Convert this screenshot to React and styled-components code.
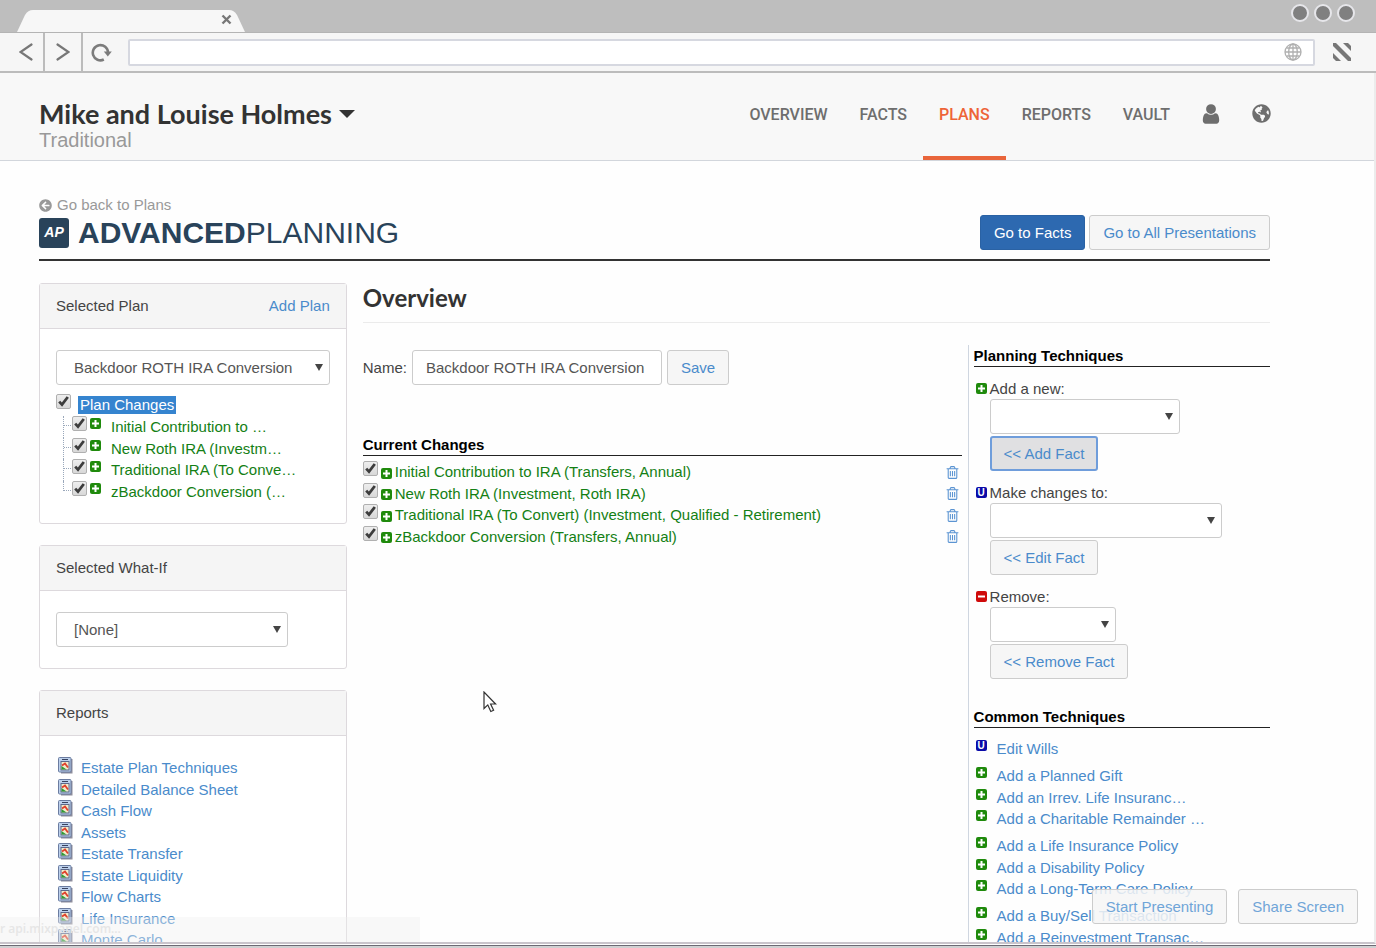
import React from "react";
import styled, { createGlobalStyle, css } from "styled-components";
import { FaArrowCircleLeft, FaGlobeAmericas } from "react-icons/fa";

const GlobalStyle = createGlobalStyle`
  * {
    box-sizing: border-box;
  }
  body {
    margin: 0;
    background: #fefefe;
    color: #444;
    font-family: "Liberation Sans", Arial, sans-serif;
    font-size: 15px;
    line-height: 22px;
  }
  a {
    color: #4a8bcb;
    text-decoration: none;
  }
  h1, h2, h3, p, ul {
    margin: 0;
    padding: 0;
  }
  ul {
    list-style: none;
  }
  button, input, select {
    font: inherit;
  }
`;

const Frame = styled.div`
  display: flex;
  flex-direction: column;
  height: 100vh;
  overflow: hidden;
`;

const FrameEdge = styled.div`
  flex: none;
  height: 3px;
  margin-top: 1px;
  border-top: 1px solid #6c6a74;
  background: #d0d0d2;
`;

/* browser bar */

const TabStrip = styled.div`
  display: flex;
  justify-content: space-between;
  flex: none;
  height: 33px;
  padding: 0 21px 0 16px;
  background: #bebebe;
  border-bottom: 1px solid #b4b4b4;
`;

const Tab = styled.div`
  display: grid;
  align-self: flex-end;

  > * {
    grid-area: 1 / 1;
  }
  svg {
    display: block;
  }
`;

const TabClose = styled.button`
  justify-self: end;
  align-self: center;
  margin: 0 14px 4px 0;
  padding: 0;
  border: 0;
  background: none;
`;

const WindowDots = styled.div`
  display: flex;
  gap: 5px;
  padding-top: 4px;

  span {
    width: 18px;
    height: 18px;
    border: 2px solid #e6e6ea;
    border-radius: 50%;
    background: #808080;
  }
`;

const Toolbar = styled.div`
  display: flex;
  align-items: center;
  flex: none;
  height: 40px;
  padding-right: 8px;
  background: #f6f6f6;
  border-bottom: 2px solid #bcbcbc;
`;

const ToolButton = styled.button`
  display: flex;
  align-items: center;
  justify-content: center;
  align-self: stretch;
  width: ${props => props.$width || 38}px;
  padding: ${props => (props.$first ? "0 0 0 8px" : "0")};
  border: 0;
  border-right: ${props => (props.$divider ? "2px solid #bcbcbc" : "0")};
  background: none;
`;

const AddressBar = styled.div`
  display: flex;
  align-items: center;
  flex: 1;
  height: 27px;
  margin-left: 8px;
  padding-right: 11px;
  border: 2px solid #d6d8e0;
  border-radius: 2px;
  background: #fff;

  input {
    flex: 1;
    border: 0;
    outline: 0;
    background: none;
  }
`;

/* site header */

const Page = styled.div`
  position: relative;
  flex: 1;
  min-height: 0;
  overflow: hidden;
  border-right: 2px solid #ececec;
  border-bottom: 2px solid #c9c4cb;
`;

const SiteHeader = styled.header`
  display: flex;
  justify-content: space-between;
  height: 88px;
  padding: 0 87px 0 39px;
  background: #f8f8f8;
  border-bottom: 1px solid #d2d6dc;
`;

const Client = styled.div`
  padding-top: 26px;

  h1 {
    display: flex;
    align-items: center;
    gap: 7px;
    color: #333;
    font-family: Lato, sans-serif;
    font-size: 27px;
    font-weight: 700;
    line-height: 30px;
  }
  p {
    color: #999;
    font-size: 20px;
    line-height: 22px;
  }
`;

const Caret = styled.span`
  border-top: 8px solid #333;
  border-left: 8px solid transparent;
  border-right: 8px solid transparent;
`;

const Nav = styled.nav`
  display: flex;
`;

const NavLink = styled.a`
  display: flex;
  align-items: flex-start;
  padding: 31px 16px 0;
  color: #6e6e6e;
  font-family: Roboto, sans-serif;
  font-size: 16px;
  font-weight: 500;

  ${props =>
    props.$active &&
    css`
      color: #ee6337;
      border-bottom: 4px solid #e9653b;
    `}
`;

/* page */

const Content = styled.main`
  padding: 34px 104px 0 39px;
`;

const PageHead = styled.div`
  display: flex;
  align-items: flex-end;
  justify-content: space-between;
  margin-bottom: 22px;
  padding-bottom: 9px;
  border-bottom: 2px solid #333;
`;

const BackLink = styled.a`
  display: flex;
  align-items: center;
  gap: 5px;
  line-height: 20px;
  color: #999;
`;

const Brand = styled.h2`
  display: flex;
  align-items: center;
  color: #29435a;
  font-size: 30px;
  font-weight: 400;
  line-height: 35px;
`;

const BrandBadge = styled.span`
  display: flex;
  align-items: center;
  justify-content: center;
  width: 30px;
  height: 30px;
  margin-right: 9px;
  border-radius: 3px;
  background: #29435a;
  color: #fff;
  font-size: 14px;
  font-style: italic;
  font-weight: 700;
`;

const Button = styled.button`
  height: 35px;
  padding: 0 13px;
  border: 1px solid #ccc;
  border-radius: 3px;
  background: #f6f6f6;
  color: #4a8bcb;
  white-space: nowrap;

  ${props =>
    props.$primary &&
    css`
      border-color: #2a62a4;
      background: #2d69b0;
      color: #fff;
    `}
  ${props =>
    props.$pressed &&
    css`
      border: 2px solid #6f9ddb;
      background: #e0e0e2;
      padding: 0 12px;
    `}
`;

const ButtonRow = styled.div`
  display: flex;
  gap: 4px;
`;

const Columns = styled.div`
  display: grid;
  grid-template-columns: 1fr 3fr;
`;

const Panel = styled.section`
  margin-bottom: 21px;
  border: 1px solid #ddd9dd;
  border-radius: 3px;
  background: #fff;
`;

const PanelHead = styled.div`
  display: flex;
  justify-content: space-between;
  padding: 11px 16px;
  border-bottom: 1px solid #ddd9dd;
  background: #f5f5f5;
`;

const PanelBody = styled.div`
  padding: 21px 16px;
`;

const SelectBox = styled.span`
  position: relative;
  display: block;
  width: ${props => props.$width || "100%"};

  &::after {
    content: "";
    position: absolute;
    top: 14px;
    right: 7px;
    border-top: 7px solid #444;
    border-left: 4px solid transparent;
    border-right: 4px solid transparent;
    pointer-events: none;
  }
  select {
    width: 100%;
    height: 35px;
    padding: 0 17px;
    appearance: none;
    border: 1px solid #ccc;
    border-radius: 3px;
    background: #fff;
    color: #555;
  }
`;

const CheckBox = styled.span`
  display: grid;
  flex: none;
  width: 15px;
  height: 15px;

  > * {
    grid-area: 1 / 1;
  }
  input {
    width: 15px;
    height: 15px;
    margin: 0;
    appearance: none;
    border: 1px solid #b0b0b0;
    border-radius: 2px;
    background: linear-gradient(#eee, #d8d8d8);
  }
  svg {
    pointer-events: none;
  }
`;

const Row = styled.li`
  display: flex;
  line-height: 22px;

  &:nth-child(even) {
    line-height: 21px;
  }
`;

const TreeRoot = styled.div`
  display: flex;
  gap: 7px;
  min-height: 22px;
  margin-top: 9px;

  label {
    align-self: center;
    padding: 0 2px;
    background: #3584cf;
    color: #fff;
    line-height: 18px;
  }
`;

const TreeRow = styled(Row)`
  margin-left: 7px;
  color: #148014;

  &::before {
    content: "";
    width: 8px;
    border-left: 1px dotted #9aa8bb;
    background: repeating-linear-gradient(90deg, #9aa8bb 0 1px, #fff 1px 2px) 0 9px / 8px 1px no-repeat;
  }
  &:last-child::before {
    height: 10px;
  }
  label {
    margin-left: 10px;
  }
`;

const Marker = styled.span`
  display: flex;
  flex: none;
  align-items: center;
  justify-content: center;
  width: 11px;
  height: 11px;
  border-radius: 2px;
  background: ${props => props.$color};
  color: #fff;
  font-size: 10px;
  font-weight: 700;
  line-height: 11px;
`;

const TreeMarker = styled.span`
  padding: 2px 0 0 3px;
`;

const ReportRow = styled(Row)`
  gap: 8px;
  padding-left: 2px;
`;

const Main = styled.div`
  padding-left: 16px;
`;

const Title = styled.h2`
  padding-bottom: 9px;
  border-bottom: 1px solid #ebebeb;
  color: #333;
  font-family: Lato, sans-serif;
  font-size: 24px;
  font-weight: 700;
  line-height: 30px;
`;

const Split = styled.div`
  display: grid;
  grid-template-columns: 2fr 1fr;
  margin-top: 22px;
`;

const SectionTitle = styled.h3`
  border-bottom: 1px solid #222;
  color: #000;
  font-size: 15px;
  font-weight: 700;
  line-height: 21px;
`;

const Changes = styled.div`
  padding: 5px 6px 0 0;
`;

const NameForm = styled.form`
  display: flex;
  align-items: center;
  gap: 5px;
  margin-bottom: 49px;

  input {
    width: 250px;
    height: 35px;
    padding: 0 13px;
    border: 1px solid #ccc;
    border-radius: 3px;
    color: #555;
  }
`;

const ChangeList = styled.ul`
  padding-top: 5px;
`;

const ChangeRow = styled(Row)`
  align-items: center;
  color: #148014;

  ${CheckBox} {
    align-self: flex-start;
  }
  ${Marker} {
    margin: 2px 3px 0 3px;
  }
  label {
    flex: 1;
  }
`;

const TrashButton = styled.button`
  display: flex;
  margin-right: 2px;
  padding: 0;
  border: 0;
  background: none;
  color: #5b94d2;
`;

const Techniques = styled.div`
  min-height: 620px;
  padding-left: 5px;
  border-left: 1px solid #cfd6e0;
`;

const FieldList = styled.div`
  margin: 11px 0 16px;
`;

const Field = styled.div`
  padding-bottom: 11px;

  > div {
    display: flex;
    flex-direction: column;
    align-items: flex-start;
    gap: 2px;
    padding-left: 16px;
  }
`;

const FieldLabel = styled.label`
  display: flex;
  align-items: center;
  gap: 3px;
  padding-left: 2px;
  line-height: 21px;
`;

const LinkGroup = styled.ul`
  margin-top: ${props => (props.$first ? 10 : 5)}px;
`;

const LinkRow = styled(Row)`
  gap: 10px;
  padding-left: 2px;

  ${Marker} {
    margin-top: 2px;
  }
`;

const FloatingButtons = styled.div`
  position: absolute;
  right: 16px;
  bottom: 18px;
  display: flex;
  gap: 11px;

  button {
    background: rgba(246, 246, 246, 0.85);
    color: #70a5d8;
  }
`;

const StatusBar = styled.div`
  position: absolute;
  left: 0;
  bottom: 0;
  width: 420px;
  max-width: 100%;
  height: 25px;
  background: rgba(240, 240, 240, 0.4);
  color: #e6e6e6;
  font-family: "Open Sans", sans-serif;
  font-size: 12px;
  font-weight: 600;
  line-height: 24px;
`;

const Pointer = styled.svg`
  position: absolute;
  top: 618px;
  left: 483px;
`;

const MARKERS = {
  add: "#1f8a0c",
  update: "#0a0aa8",
  remove: "#cf0a0a",
};

const planChanges = [
  { id: 1, short: "Initial Contribution to …", name: "Initial Contribution to IRA (Transfers, Annual)" },
  { id: 2, short: "New Roth IRA (Investm…", name: "New Roth IRA (Investment, Roth IRA)" },
  { id: 3, short: "Traditional IRA (To Conve…", name: "Traditional IRA (To Convert) (Investment, Qualified - Retirement)" },
  { id: 4, short: "zBackdoor Conversion (…", name: "zBackdoor Conversion (Transfers, Annual)" },
];

const reports = [
  "Estate Plan Techniques",
  "Detailed Balance Sheet",
  "Cash Flow",
  "Assets",
  "Estate Transfer",
  "Estate Liquidity",
  "Flow Charts",
  "Life Insurance",
  "Monte Carlo",
];

const fields = [
  { id: "add", label: "Add a new:", button: "<< Add Fact", width: "190px", pressed: true },
  { id: "update", label: "Make changes to:", button: "<< Edit Fact", width: "232px" },
  { id: "remove", label: "Remove:", button: "<< Remove Fact", width: "126px" },
];

const techniques = [
  { type: "update", items: ["Edit Wills"] },
  { type: "add", items: ["Add a Planned Gift", "Add an Irrev. Life Insuranc…", "Add a Charitable Remainder …"] },
  { type: "add", items: ["Add a Life Insurance Policy", "Add a Disability Policy", "Add a Long-Term Care Policy"] },
  { type: "add", items: ["Add a Buy/Sell Transaction", "Add a Reinvestment Transac…"] },
];

const TypeMarker = ({ type }) => (
  <Marker $color={MARKERS[type]}>
    {type === "update" ? (
      "U"
    ) : (
      <svg width="11" height="11" viewBox="0 0 11 11" stroke="#fff" strokeWidth="2">
        <path d={type === "add" ? "M2 5.5h7M5.5 2v7" : "M2 5.5h7"} />
      </svg>
    )}
  </Marker>
);

const Check = ({ id }) => (
  <CheckBox>
    <input type="checkbox" id={id} defaultChecked />
    <svg width="15" height="15" viewBox="0 0 15 15" fill="none" stroke="#3d3d3d" strokeWidth="2.8">
      <path d="M3.2 7.6l2.8 3L11.8 3" />
    </svg>
  </CheckBox>
);

const Trash = () => (
  <svg width="15" height="15" viewBox="0 0 1792 1792" fill="currentColor">
    <path d="M704 736v576q0 14-9 23t-23 9h-64q-14 0-23-9t-9-23v-576q0-14 9-23t23-9h64q14 0 23 9t9 23zm256 0v576q0 14-9 23t-23 9h-64q-14 0-23-9t-9-23v-576q0-14 9-23t23-9h64q14 0 23 9t9 23zm256 0v576q0 14-9 23t-23 9h-64q-14 0-23-9t-9-23v-576q0-14 9-23t23-9h64q14 0 23 9t9 23zm128 724v-948h-896v948q0 22 7 40.5t14.5 27 10.5 8.5h832q3 0 10.5-8.5t14.5-27 7-40.5zm-672-1076h448l-48-117q-7-9-17-11h-317q-10 2-17 11zm928 32v64q0 14-9 23t-23 9h-96v948q0 83-47 143.5t-113 60.5h-832q-66 0-113-58.5t-47-141.5v-952h-96q-14 0-23-9t-9-23v-64q0-14 9-23t23-9h309l70-167q15-37 54-63t79-26h320q40 0 79 26t54 63l70 167h309q14 0 23 9t9 23z" />
  </svg>
);

const User = () => (
  <svg width="18" height="20" viewBox="192 128 1408 1536" fill="currentColor">
    <path d="M1536 1399q0 109-62.5 187t-150.5 78h-854q-88 0-150.5-78t-62.5-187q0-85 8.5-160.5t31.5-152 58.5-131 94-89 134.5-34.5q131 128 313 128t313-128q76 0 134.5 34.5t94 89 58.5 131 31.5 152 8.5 160.5zm-256-887q0 159-112.5 271.5t-271.5 112.5-271.5-112.5-112.5-271.5 112.5-271.5 271.5-112.5 271.5 112.5 112.5 271.5z" />
  </svg>
);

const ReportIcon = () => (
  <svg width="15" height="17" viewBox="0 0 15 17">
    <path d="M2 2h12.5v14.5H3z" fill="#8d8d9c" />
    <rect x="0.5" y="0.5" width="12.5" height="14.5" rx="1" fill="#bcd0ec" stroke="#6b7ca0" />
    <path d="M4 2.5h6" stroke="#39435f" />
    <rect x="3" y="4.5" width="8" height="8.5" fill="#f3eccb" stroke="#5d688a" />
    <path d="M4 8.5l3-2 3 4" stroke="#e0402b" strokeWidth="1.8" fill="none" />
    <path d="M3.5 12.5V9l5 3.5z" fill="#2f9a34" />
  </svg>
);

const BrowserBar = () => (
  <>
    <TabStrip>
      <Tab>
        <svg width="230" height="22" viewBox="0 0 230 22">
          <path d="M1 22L9 5q3-5 8-5h196q5 0 8 5l8 17z" fill="#f7f7f7" />
        </svg>
        <TabClose aria-label="Close tab">
          <svg width="11" height="11" viewBox="0 0 11 11" stroke="#777" strokeWidth="2.4">
            <path d="M1.5 1.5l8 8M9.5 1.5l-8 8" />
          </svg>
        </TabClose>
      </Tab>
      <WindowDots>
        <span />
        <span />
        <span />
      </WindowDots>
    </TabStrip>
    <Toolbar>
      <ToolButton aria-label="Back" $width={45} $first $divider>
        <svg width="14" height="18" viewBox="0 0 14 18" fill="none" stroke="#777" strokeWidth="2.2" strokeLinecap="round">
          <path d="M12.5 1.5L1.5 9l11 7.5" />
        </svg>
      </ToolButton>
      <ToolButton aria-label="Forward" $divider>
        <svg width="14" height="18" viewBox="0 0 14 18" fill="none" stroke="#777" strokeWidth="2.2" strokeLinecap="round">
          <path d="M1.5 1.5l11 7.5-11 7.5" />
        </svg>
      </ToolButton>
      <ToolButton aria-label="Reload" $width={37}>
        <svg width="21" height="19" viewBox="0 0 21 19" fill="none" stroke="#7c7c7c" strokeWidth="2.6">
          <path d="M12.8 16.5A7.6 7.6 0 1 1 17 9.5" />
          <path d="M12.8 8.5h8l-4 5z" fill="#7c7c7c" stroke="none" />
        </svg>
      </ToolButton>
      <AddressBar>
        <input type="text" aria-label="Address" />
        <svg width="18" height="18" viewBox="0 0 18 18" fill="none" stroke="#b0b0b0" strokeWidth="1.3">
          <circle cx="9" cy="9" r="8" />
          <ellipse cx="9" cy="9" rx="4.3" ry="8" />
          <path d="M9 1v16M1 9h16M2.5 5h13M2.5 13h13" />
        </svg>
      </AddressBar>
      <ToolButton aria-label="Menu" $width={53}>
        <svg width="18" height="18" viewBox="0 0 18 18" fill="#777">
          <path d="M0 0h3l15 15v3h-3L0 3z" />
          <path d="M10 0h5l3 3v5z" />
          <path d="M0 10l8 8H3l-3-3z" />
        </svg>
      </ToolButton>
    </Toolbar>
  </>
);

const Sidebar = () => (
  <aside>
    <Panel>
      <PanelHead>
        <label htmlFor="plan">Selected Plan</label>
        <a href="#add-plan">Add Plan</a>
      </PanelHead>
      <PanelBody>
        <SelectBox>
          <select id="plan">
            <option>Backdoor ROTH IRA Conversion</option>
          </select>
        </SelectBox>
        <TreeRoot>
          <Check id="plan-changes" />
          <label htmlFor="plan-changes">Plan Changes</label>
        </TreeRoot>
        <ul>
          {planChanges.map(change => (
            <TreeRow key={change.id}>
              <Check id={`tree-${change.id}`} />
              <TreeMarker>
                <TypeMarker type="add" />
              </TreeMarker>
              <label htmlFor={`tree-${change.id}`}>{change.short}</label>
            </TreeRow>
          ))}
        </ul>
      </PanelBody>
    </Panel>
    <Panel>
      <PanelHead>
        <label htmlFor="what-if">Selected What-If</label>
      </PanelHead>
      <PanelBody>
        <SelectBox $width="232px">
          <select id="what-if">
            <option>[None]</option>
          </select>
        </SelectBox>
      </PanelBody>
    </Panel>
    <Panel>
      <PanelHead>Reports</PanelHead>
      <PanelBody>
        <ul>
          {reports.map(report => (
            <ReportRow key={report}>
              <ReportIcon />
              <a href="#report">{report}</a>
            </ReportRow>
          ))}
        </ul>
      </PanelBody>
    </Panel>
  </aside>
);

const App = () => (
  <>
    <GlobalStyle />
    <Frame>
      <BrowserBar />
      <Page>
        <SiteHeader>
          <Client>
            <h1>
              Mike and Louise Holmes <Caret />
            </h1>
            <p>Traditional</p>
          </Client>
          <Nav>
            <NavLink href="#overview">OVERVIEW</NavLink>
            <NavLink href="#facts">FACTS</NavLink>
            <NavLink href="#plans" $active>
              PLANS
            </NavLink>
            <NavLink href="#reports">REPORTS</NavLink>
            <NavLink href="#vault">VAULT</NavLink>
            <NavLink href="#account" aria-label="Account">
              <User />
            </NavLink>
            <NavLink href="#world" aria-label="Language">
              <FaGlobeAmericas size={19} />
            </NavLink>
          </Nav>
        </SiteHeader>
        <Content>
          <PageHead>
            <div>
              <BackLink href="#plans">
                <FaArrowCircleLeft size={13} />
                Go back to Plans
              </BackLink>
              <Brand>
                <BrandBadge>AP</BrandBadge>
                <b>ADVANCED</b>PLANNING
              </Brand>
            </div>
            <ButtonRow>
              <Button $primary>Go to Facts</Button>
              <Button>Go to All Presentations</Button>
            </ButtonRow>
          </PageHead>
          <Columns>
            <Sidebar />
            <Main>
              <Title>Overview</Title>
              <Split>
                <Changes>
                  <NameForm>
                    <label htmlFor="name">Name:</label>
                    <input id="name" type="text" defaultValue="Backdoor ROTH IRA Conversion" />
                    <Button type="button">Save</Button>
                  </NameForm>
                  <SectionTitle>Current Changes</SectionTitle>
                  <ChangeList>
                    {planChanges.map(change => (
                      <ChangeRow key={change.id}>
                        <Check id={`change-${change.id}`} />
                        <TypeMarker type="add" />
                        <label htmlFor={`change-${change.id}`}>{change.name}</label>
                        <TrashButton aria-label="Delete change">
                          <Trash />
                        </TrashButton>
                      </ChangeRow>
                    ))}
                  </ChangeList>
                </Changes>
                <Techniques>
                  <SectionTitle>Planning Techniques</SectionTitle>
                  <FieldList>
                    {fields.map(field => (
                      <Field key={field.id}>
                        <FieldLabel htmlFor={field.id}>
                          <TypeMarker type={field.id} />
                          {field.label}
                        </FieldLabel>
                        <div>
                          <SelectBox $width={field.width}>
                            <select id={field.id} />
                          </SelectBox>
                          <Button $pressed={field.pressed}>{field.button}</Button>
                        </div>
                      </Field>
                    ))}
                  </FieldList>
                  <SectionTitle>Common Techniques</SectionTitle>
                  {techniques.map((group, i) => (
                    <LinkGroup key={i} $first={i === 0}>
                      {group.items.map(item => (
                        <LinkRow key={item}>
                          <TypeMarker type={group.type} />
                          <a href="#technique">{item}</a>
                        </LinkRow>
                      ))}
                    </LinkGroup>
                  ))}
                </Techniques>
              </Split>
            </Main>
          </Columns>
        </Content>
        <StatusBar>r api.mixpanel.com…</StatusBar>
        <FloatingButtons>
          <Button>Start Presenting</Button>
          <Button>Share Screen</Button>
        </FloatingButtons>
        <Pointer width="14" height="22" viewBox="0 0 14 22">
          <path d="M1 1v16.5l3.8-3.6 3 6.6 2.8-1.3-3-6.200h5z" fill="#fff" stroke="#333" strokeWidth="1.2" />
        </Pointer>
      </Page>
      <FrameEdge />
    </Frame>
  </>
);

export default App;
